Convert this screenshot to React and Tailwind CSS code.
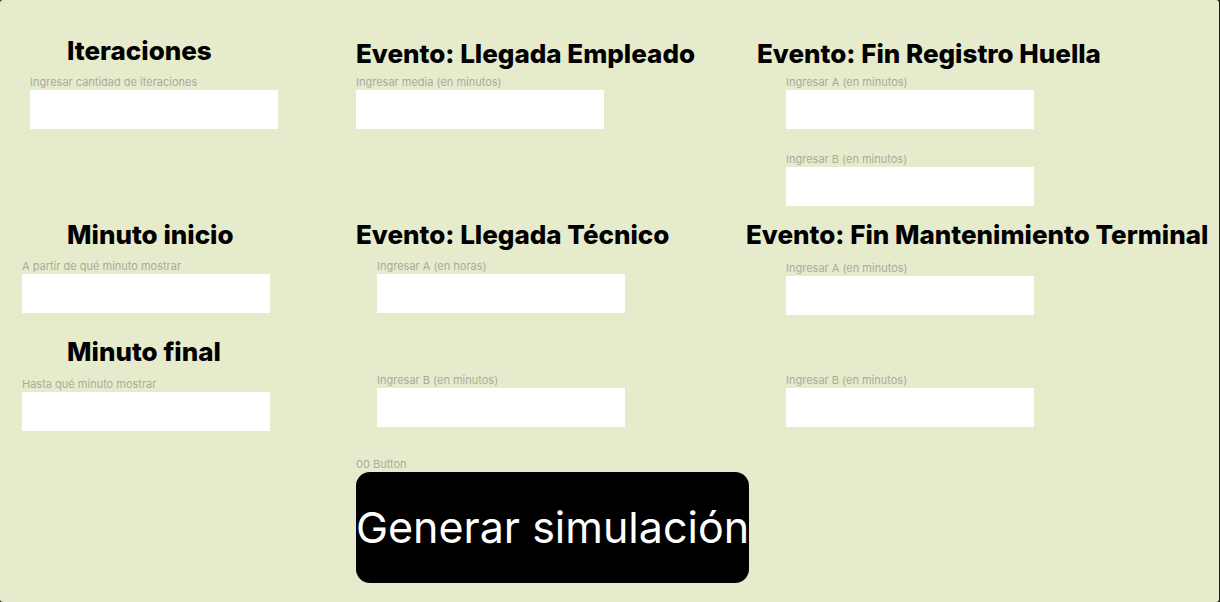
import React from 'react';

const font = { fontFamily: 'Inter, "Noto Sans", sans-serif' };

function Heading({ children, className = '' }) {
  return (
    <h2 className={`text-[26px] leading-[31px] font-extrabold text-black whitespace-nowrap ${className}`}>
      {children}
    </h2>
  );
}

function Field({ label, className = '', inputClass = '' }) {
  return (
    <div className={`flex flex-col ${className}`}>
      <label className="text-[11px] leading-[13px] text-[#a9ab9c] whitespace-nowrap">{label}</label>
      <input type="text" className={`w-[248px] h-[39px] bg-white outline-none border-0 ${inputClass}`} />
    </div>
  );
}

export default function App() {
  return (
    <div className="w-[1220px] h-[602px] bg-[#1e1e1e] overflow-hidden" style={font}>
      <div className="w-[1219px] h-[602px] rounded-[3px] bg-[#e6ebcc] grid grid-cols-[334px_390px_1fr] pl-[22px]">

        {/* Columna 1 */}
        <div className="flex flex-col items-start">
          <Heading className="mt-[35px] ml-[45px]">Iteraciones</Heading>
          <Field label="Ingresar cantidad de iteraciones" className="mt-[10px] ml-[8px]" inputClass="mt-[1px]" />

          <Heading className="mt-[90px] ml-[45px]">Minuto inicio</Heading>
          <Field label="A partir de qué minuto mostrar" className="mt-[10px]" inputClass="mt-[1px]" />

          <Heading className="mt-[23px] ml-[45px]">Minuto final</Heading>
          <Field label="Hasta qué minuto mostrar" className="mt-[11px]" inputClass="mt-[1px]" />
        </div>

        {/* Columna 2 */}
        <div className="flex flex-col items-start">
          <Heading className="mt-[38px]">Evento: Llegada Empleado</Heading>
          <Field label="Ingresar media (en minutos)" className="mt-[7px]" inputClass="mt-[1px]" />

          <Heading className="mt-[90px]">Evento: Llegada Técnico</Heading>
          <Field label="Ingresar A (en horas)" className="mt-[10px] ml-[21px]" inputClass="mt-[1px]" />
          <Field label="Ingresar B (en minutos)" className="mt-[61px] ml-[21px]" inputClass="mt-[1px]" />

          <span className="mt-[31px] text-[11px] leading-[13px] text-[#a9ab9c]">00 Button</span>
          <button className="mt-[1px] w-[393px] h-[111px] rounded-[14px] bg-black text-white text-[43px] font-normal flex items-center justify-center whitespace-nowrap">
            Generar simulación
          </button>
        </div>

        {/* Columna 3 */}
        <div className="flex flex-col items-start">
          <Heading className="mt-[38px] ml-[11px]">Evento: Fin Registro Huella</Heading>
          <Field label="Ingresar A (en minutos)" className="mt-[7px] ml-[40px]" inputClass="mt-[1px]" />
          <Field label="Ingresar B (en minutos)" className="mt-[24px] ml-[40px]" inputClass="mt-[1px]" />

          <Heading className="mt-[13px]">Evento: Fin Mantenimiento Terminal</Heading>
          <Field label="Ingresar A (en minutos)" className="mt-[12px] ml-[40px]" inputClass="mt-[1px]" />
          <Field label="Ingresar B (en minutos)" className="mt-[59px] ml-[40px]" inputClass="mt-[1px]" />
        </div>
      </div>
    </div>
  );
}
